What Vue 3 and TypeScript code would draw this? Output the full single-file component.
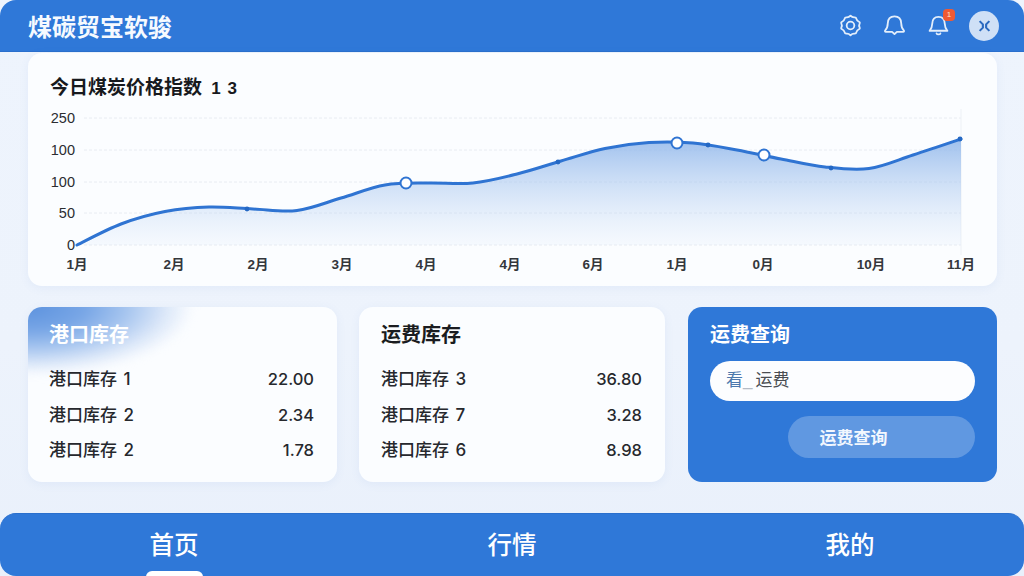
<template>
  <div class="page">
    <header class="topbar">
      <h1 class="brand">煤碳贸宝软骏</h1>
      <div class="topbar-actions">
        <svg class="icon" viewBox="0 0 24 24">
          <path d="M12 1.800c1.300 1.400 2.600 2 4.500 1.700 1 .0 1.500.6 1.700 1.600.3 1.500 1.100 2.400 2.600 3 1 .4 1.100 1.200.7 2-.7 1.300-.7 2.500 0 3.800.4.800.3 1.600-.7 2-1.500.6-2.300 1.500-2.600 3-.2 1-.7 1.600-1.700 1.600-1.900-.3-3.200.3-4.500 1.700-1.300-1.400-2.600-2-4.500-1.700-1 0-1.500-.6-1.700-1.600-.3-1.500-1.100-2.400-2.600-3-1-.4-1.100-1.200-.7-2 .7-1.300.7-2.500 0-3.800-.4-.8-.3-1.600.7-2 1.500-.6 2.300-1.500 2.600-3 .2-1 .7-1.600 1.700-1.600 1.900.3 3.200-.3 4.500-1.700z" />
          <circle cx="12" cy="12" r="4" />
        </svg>
        <svg class="icon" viewBox="0 0 24 24">
          <path d="M12 2.500c-4.600 0-6.900 3-7 7.200-.1 3.500-.8 5.600-2.700 7.400-.6.600-.2 1.500.6 1.500H9.500l2.500 2.400 2.500-2.400h6.600c.8 0 1.200-.9.600-1.500-1.900-1.800-2.600-3.900-2.700-7.400-.1-4.200-2.400-7.200-7-7.200z" />
        </svg>
        <div class="bell">
          <svg class="icon" viewBox="0 0 24 24">
            <path d="M12 3c-4.200 0-6.400 2.900-6.500 6.900-.1 3.500-.8 5.500-2.800 7.600h18.600c-2-2.100-2.700-4.100-2.800-7.600C18.400 5.900 16.200 3 12 3z" />
            <path d="M10 20.300c.5 1.300 3.500 1.300 4 0" />
          </svg>
          <span class="badge">1</span>
        </div>
        <div class="avatar">
          <svg viewBox="0 0 16 16" class="avatar-glyph">
            <path d="M2 2l4 4v4l-4 4M14 2l-4 4v4l4 4" />
          </svg>
        </div>
      </div>
    </header>

    <main class="content">
      <section class="card chart-card">
        <h2 class="chart-title">今日煤炭价格指数 <span class="chart-title-num">1 3</span></h2>
        <svg class="chart" viewBox="28 105 969 178">
          <defs>
            <linearGradient id="areaFill" gradientUnits="userSpaceOnUse" x1="0" y1="138" x2="0" y2="246">
              <stop offset="0" stop-color="#8fb6ea" stop-opacity="0.85" />
              <stop offset="1" stop-color="#cfe0f7" stop-opacity="0.12" />
            </linearGradient>
          </defs>
          <line v-for="y in gridLines" :key="y" x1="84" x2="961" :y1="y" :y2="y" class="grid-line" />
          <line x1="961" x2="961" y1="108" y2="254" class="grid-end" />
          <path :d="areaPath" fill="url(#areaFill)" />
          <path :d="linePath" class="curve" />
          <circle v-for="d in smallDots" :key="d[0]" :cx="d[0]" :cy="d[1]" r="2.400" class="dot" />
          <circle v-for="d in openDots" :key="d[0]" :cx="d[0]" :cy="d[1]" r="5.500" class="dot-open" />
          <text v-for="t in yLabels" :key="t.y" x="75" :y="t.y + 5" text-anchor="end" class="y-label">{{ t.text }}</text>
          <text v-for="t in xLabels" :key="t.x" :x="t.x" y="268" text-anchor="middle" class="x-label">{{ t.text }}</text>
        </svg>
      </section>

      <div class="cards">
        <section class="card stock-card stock-card--port stock-card--glow">
          <h3 class="stock-title stock-title--light">港口库存</h3>
          <div v-for="row in portRows" :key="row.label" class="stock-row">
            <span class="stock-label">{{ row.label }}</span>
            <span class="stock-value">{{ row.value }}</span>
          </div>
        </section>

        <section class="card stock-card stock-card--freight">
          <h3 class="stock-title">运费库存</h3>
          <div v-for="row in freightRows" :key="row.label" class="stock-row">
            <span class="stock-label">{{ row.label }}</span>
            <span class="stock-value">{{ row.value }}</span>
          </div>
        </section>

        <section class="query-card">
          <h3 class="query-title">运费查询</h3>
          <div class="query-input"><span class="query-input-first">看</span><span class="query-input-sep">_</span>运费</div>
          <button class="query-btn">运费查询</button>
        </section>
      </div>
    </main>

    <nav class="tabbar">
      <a v-for="(tab, index) in tabs" :key="tab" class="tab" :class="{ 'tab--active': index === 0 }">{{ tab }}</a>
    </nav>
  </div>
</template>

<script setup lang="ts">
const gridLines = [117, 149, 181, 212, 244];

const points: Array<[number, number]> = [
  [77, 244], [121, 223], [165, 210.5], [209, 206], [253, 208], [297, 209.5], [341, 197],
  [385, 184], [429, 182], [473, 182], [517, 173], [561, 160], [605, 147.5], [649, 141.5],
  [693, 142], [737, 149], [781, 158], [825, 166], [869, 167.5], [913, 154], [961, 138],
];

// catmull-rom to bezier so the curve stays smooth
function smooth(pts: Array<[number, number]>): string {
  let d = `M${pts[0][0]} ${pts[0][1]}`;
  for (let i = 0; i < pts.length - 1; i++) {
    const p0 = pts[Math.max(i - 1, 0)];
    const p1 = pts[i];
    const p2 = pts[i + 1];
    const p3 = pts[Math.min(i + 2, pts.length - 1)];
    const c1x = p1[0] + (p2[0] - p0[0]) / 6;
    const c1y = p1[1] + (p2[1] - p0[1]) / 6;
    const c2x = p2[0] - (p3[0] - p1[0]) / 6;
    const c2y = p2[1] - (p3[1] - p1[1]) / 6;
    d += `C${c1x.toFixed(1)} ${c1y.toFixed(1)} ${c2x.toFixed(1)} ${c2y.toFixed(1)} ${p2[0]} ${p2[1]}`;
  }
  return d;
}

const linePath = smooth(points);
const areaPath = `${linePath}L961 244L77 244Z`;

const smallDots = [[247, 208], [558, 161], [708, 144], [831, 167], [960, 138]];
const openDots = [[406, 182], [677, 142], [764, 154]];

const yLabels = [
  { y: 117, text: '250' },
  { y: 149, text: '100' },
  { y: 181, text: '100' },
  { y: 212, text: '50' },
  { y: 244, text: '0' },
];

const xLabels = [
  { x: 77, text: '1月' },
  { x: 174, text: '2月' },
  { x: 258, text: '2月' },
  { x: 342, text: '3月' },
  { x: 426, text: '4月' },
  { x: 510, text: '4月' },
  { x: 593, text: '6月' },
  { x: 677, text: '1月' },
  { x: 763, text: '0月' },
  { x: 871, text: '10月' },
  { x: 961, text: '11月' },
];

const portRows = [
  { label: '港口库存 1', value: '22.00' },
  { label: '港口库存 2', value: '2.34' },
  { label: '港口库存 2', value: '1.78' },
];

const freightRows = [
  { label: '港口库存 3', value: '36.80' },
  { label: '港口库存 7', value: '3.28' },
  { label: '港口库存 6', value: '8.98' },
];

const tabs = ['首页', '行情', '我的'];
</script>

<style scoped>
.page {
  width: 1024px;
  height: 576px;
  display: flex;
  flex-direction: column;
  overflow: hidden;
  background: linear-gradient(180deg, #eef4fd 0%, #edf3fc 60%, #e9f0fb 100%);
  font-family: "Liberation Sans", "Noto Sans CJK SC", sans-serif;
  color: #1c1f24;
}
.topbar {
  height: 52px;
  flex-shrink: 0;
  display: flex;
  align-items: center;
  justify-content: space-between;
  padding: 0 25px 0 28px;
  box-sizing: border-box;
  background: #2f78d8;
  border-radius: 16px 16px 0 0;
  border-bottom: 1px solid #2a6fcd;
}
.brand {
  margin: 0;
  font-size: 24px;
  font-weight: 600;
  color: #f6faff;
}
.topbar-actions {
  display: flex;
  align-items: center;
  gap: 21px;
}
.icon {
  display: block;
  width: 23px;
  height: 23px;
  fill: none;
  stroke: #e3eefb;
  stroke-width: 1.900;
  stroke-linejoin: round;
  stroke-linecap: round;
}
.bell {
  position: relative;
}
.badge {
  position: absolute;
  top: -5px;
  right: -5px;
  width: 12px;
  height: 12px;
  border-radius: 4px;
  background: #ee5a34;
  color: #fde3c8;
  font-size: 8px;
  line-height: 12px;
  text-align: center;
}
.avatar {
  width: 30px;
  height: 30px;
  margin-left: -2px;
  border-radius: 50%;
  background: #cfe0f6;
  display: flex;
  align-items: center;
  justify-content: center;
}
.avatar-glyph {
  width: 13px;
  height: 14px;
  fill: none;
  stroke: #2a69bf;
  stroke-width: 2.600;
}
.content {
  flex: 1;
  display: flex;
  flex-direction: column;
  gap: 21px;
  padding: 1px 27px 0 28px;
}
.card {
  background: #fbfdff;
  border-radius: 14px;
  box-shadow: 0 2px 10px rgba(90, 130, 200, 0.08);
}
.chart-card {
  height: 233px;
  position: relative;
  overflow: hidden;
  flex-shrink: 0;
}
.chart-title {
  margin: 0;
  padding: 21px 0 0 22px;
  font-size: 19px;
  line-height: 28px;
  font-weight: 600;
  color: #17191d;
}
.chart-title-num {
  margin-left: 4px;
  font-size: 17px;
  letter-spacing: 1px;
}
.chart {
  display: block;
  width: 969px;
  height: 178px;
  margin-top: 3px;
}
.grid-line {
  stroke: #e8ecf2;
  stroke-width: 1;
  stroke-dasharray: 3 2;
}
.grid-end {
  stroke: #edf1f6;
  stroke-width: 1;
}
.curve {
  fill: none;
  stroke: #2f74d2;
  stroke-width: 3;
  stroke-linecap: round;
}
.dot {
  fill: #2468c4;
}
.dot-open {
  fill: #fff;
  stroke: #2f74d2;
  stroke-width: 2;
}
.y-label {
  font-size: 14.500px;
  fill: #2b2d31;
}
.x-label {
  font-size: 13.500px;
  font-weight: 600;
  fill: #33363b;
}
.cards {
  display: flex;
  gap: 22px;
  height: 175px;
}
.stock-card {
  position: relative;
  overflow: hidden;
  box-sizing: border-box;
  padding: 14px 23px 0 22px;
}
.stock-card--port {
  width: 309px;
  padding-left: 21px;
}
.stock-card--freight {
  width: 306px;
}
.stock-card--glow::before {
  content: "";
  position: absolute;
  left: -12px;
  top: -12px;
  width: 200px;
  height: 96px;
  filter: blur(5px);
  background: radial-gradient(ellipse 165px 68px at 12px 12px, #5c92de 0%, #78a6e6 35%, #a6c5ef 60%, #d8e5f8 82%, rgba(251, 253, 255, 0) 100%);
}
.stock-title {
  position: relative;
  margin: 0 0 10px;
  font-size: 20px;
  line-height: 28px;
  font-weight: 600;
  color: #1a1c20;
}
.stock-title--light {
  color: #fff;
}
.stock-row {
  position: relative;
  display: flex;
  justify-content: space-between;
  align-items: baseline;
  height: 35.500px;
  padding-top: 5px;
  box-sizing: border-box;
  font-family: Inter, "Noto Sans CJK SC", sans-serif;
  font-size: 17px;
  font-weight: 500;
  line-height: 30px;
  color: #26282d;
}
.stock-label {
  word-spacing: 2px;
}
.stock-value {
  font-size: 16.500px;
}
.query-card {
  width: 309px;
  margin-left: 1px;
  box-sizing: border-box;
  background: #2f78d8;
  border-radius: 14px;
  padding: 14px 22px 0;
  display: flex;
  flex-direction: column;
}
.query-title {
  margin: 0 0 12px;
  font-size: 20px;
  line-height: 28px;
  font-weight: 600;
  color: #fff;
}
.query-input {
  height: 40px;
  border-radius: 20px;
  background: #fcfdff;
  padding-left: 16px;
  font-size: 17px;
  line-height: 40px;
  color: #4a4d52;
}
.query-input-first {
  color: #4c78ad;
}
.query-input-sep {
  margin-right: 3px;
  color: #b5bcc6;
}
.query-btn {
  align-self: flex-end;
  width: 187px;
  height: 42px;
  margin-top: 15px;
  border: none;
  border-radius: 21px;
  background: rgba(255, 255, 255, 0.24);
  color: #f2f7fe;
  font-family: inherit;
  font-size: 17px;
  font-weight: 600;
  padding: 0 56px 2px 0;
}
.tabbar {
  height: 63px;
  flex-shrink: 0;
  display: grid;
  grid-template-columns: repeat(3, 1fr);
  padding: 0 5px;
  box-sizing: border-box;
  background: #2f78d8;
  border-radius: 16px;
  border-top: 1px solid #2a6fcd;
}
.tab {
  position: relative;
  display: block;
  text-align: center;
  font-size: 24.500px;
  line-height: 63px;
  font-weight: 500;
  color: #fff;
}
.tab--active::after {
  content: "";
  position: absolute;
  left: 50%;
  bottom: 0;
  width: 57px;
  height: 6px;
  margin-left: -28px;
  background: #fff;
  border-radius: 6px 6px 0 0;
}
</style>

<style>
html, body {
  background: #eef4fd;
}
</style>
